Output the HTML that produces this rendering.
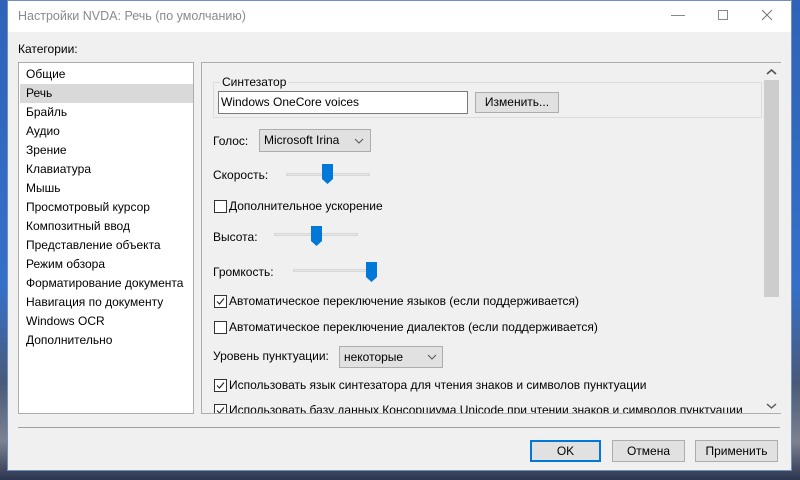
<!DOCTYPE html>
<html><head><meta charset="utf-8"><style>
*{margin:0;padding:0;box-sizing:border-box}
body{width:800px;height:480px;overflow:hidden;position:relative;background:#2a3f6a;font-family:"Liberation Sans","Noto Sans CJK SC",sans-serif;font-size:12px;color:#000}
.a{position:absolute}
.bg{left:0;top:0;width:800px;height:480px;background:linear-gradient(180deg,#2e63b8 0%,#3570c8 60%,#4a5a78 80%,#7c8290 92%,#2c3550 100%)}
.win{left:7px;top:0;width:785px;height:471px;background:#f0f0f0;border:1px solid #6f8fc0}
.tb{left:0;top:0;width:783px;height:31px;background:#fff}
.lst{left:18px;top:62px;width:176px;height:352px;background:#fff;border:1px solid #adadad;padding-top:2px}
.lst div{height:19px;line-height:19px;padding-left:7px;font-size:12px}
.pnl{left:201px;top:62px;width:580px;height:352px;background:#f0f0f0;border:1px solid #adadad;border-right:none}
.btn{background:#e1e1e1;border:1px solid #adadad;text-align:center;font-size:12px}
.cb{width:13px;height:13px;border:1px solid #333;background:#fff}
.lbl{font-size:12px;white-space:nowrap}
.track{height:3px;background:#e7eaea;border:1px solid #d6d6d6}
.th{width:11px;height:20px}
</style></head><body>
<div class="a bg"></div>
<div class="a win">
<div class="a tb"></div>
</div>
<div class="a lbl" style="left:18px;top:9px;color:#8a8a8a;font-size:12.5px">Настройки NVDA: Речь (по умолчанию)</div>
<div class="a" style="left:671px;top:15px;width:14px;height:1px;background:#888"></div>
<div class="a" style="left:718px;top:10px;width:10px;height:10px;border:1px solid #888"></div>
<svg class="a" style="left:761px;top:9px" width="12" height="12"><path d="M1 1L11 11M11 1L1 11" stroke="#777" stroke-width="1"/></svg>
<div class="a lbl" style="left:18px;top:42px">Категории:</div>
<div class="a lst">
<div>Общие</div><div style="background:#d9d9d9;margin-left:1px;padding-left:6px">Речь</div><div>Брайль</div><div>Аудио</div><div>Зрение</div><div>Клавиатура</div><div>Мышь</div><div>Просмотровый курсор</div><div>Композитный ввод</div><div>Представление объекта</div><div>Режим обзора</div><div>Форматирование документа</div><div>Навигация по документу</div><div>Windows OCR</div><div>Дополнительно</div>
</div>
<div class="a pnl"></div>
<div class="a" style="left:763px;top:63px;width:17px;height:350px;background:#f0f0f0"></div>
<div class="a" style="left:764px;top:80px;width:15px;height:217px;background:#cdcdcd"></div>
<svg class="a" style="left:766px;top:68px" width="11" height="8"><path d="M1 6L5.5 2L10 6" stroke="#555" stroke-width="1.6" fill="none"/></svg>
<svg class="a" style="left:766px;top:402px" width="11" height="8"><path d="M1 2L5.5 6L10 2" stroke="#555" stroke-width="1.4" fill="none"/></svg>
<div class="a" style="left:213px;top:82px;width:549px;height:36px;border:1px solid #dcdcdc"></div>
<div class="a lbl" style="left:220px;top:75px;background:#f0f0f0;padding:0 2px">Синтезатор</div>
<div class="a" style="left:218px;top:91px;width:250px;height:23px;background:#fff;border:1px solid #7a7a7a"></div>
<div class="a lbl" style="left:221px;top:95px">Windows OneCore voices</div>
<div class="a btn" style="left:475px;top:92px;width:84px;height:21px;line-height:19px">Изменить...</div>
<div class="a lbl" style="left:213px;top:134px">Голос:</div>
<div class="a btn" style="left:259px;top:129px;width:112px;height:23px;text-align:left;padding-left:4px;line-height:21px">Microsoft Irina</div>
<svg class="a" style="left:354px;top:138px" width="10" height="6"><path d="M1 1L5 5L9 1" stroke="#555" fill="none"/></svg>
<div class="a lbl" style="left:213px;top:168px">Скорость:</div>
<div class="a track" style="left:286px;top:173px;width:84px"></div>
<svg class="a th" style="left:322px;top:164px" width="11" height="20"><path d="M0 0H11V15L5.5 20L0 15Z" fill="#0078d7"/></svg>
<div class="a cb" style="left:214px;top:200px"></div>
<div class="a lbl" style="left:229px;top:199px">Дополнительное ускорение</div>
<div class="a lbl" style="left:213px;top:230px">Высота:</div>
<div class="a track" style="left:274px;top:233px;width:84px"></div>
<svg class="a th" style="left:311px;top:226px" width="11" height="20"><path d="M0 0H11V15L5.5 20L0 15Z" fill="#0078d7"/></svg>
<div class="a lbl" style="left:213px;top:265px">Громкость:</div>
<div class="a track" style="left:293px;top:269px;width:84px"></div>
<svg class="a th" style="left:366px;top:262px" width="11" height="20"><path d="M0 0H11V15L5.5 20L0 15Z" fill="#0078d7"/></svg>
<div class="a cb" style="left:214px;top:295px"></div>
<svg class="a" style="left:215px;top:296px" width="11" height="11"><path d="M2 5.5L4.5 8L9 2.5" stroke="#222" stroke-width="1.1" fill="none"/></svg>
<div class="a lbl" style="left:229px;top:294px">Автоматическое переключение языков (если поддерживается)</div>
<div class="a cb" style="left:214px;top:321px"></div>
<div class="a lbl" style="left:229px;top:320px">Автоматическое переключение диалектов (если поддерживается)</div>
<div class="a lbl" style="left:213px;top:349px">Уровень пунктуации:</div>
<div class="a btn" style="left:339px;top:346px;width:104px;height:22px;text-align:left;padding-left:4px;line-height:20px">некоторые</div>
<svg class="a" style="left:427px;top:354px" width="10" height="6"><path d="M1 1L5 5L9 1" stroke="#555" fill="none"/></svg>
<div class="a cb" style="left:214px;top:379px"></div>
<svg class="a" style="left:215px;top:380px" width="11" height="11"><path d="M2 5.5L4.5 8L9 2.5" stroke="#222" stroke-width="1.1" fill="none"/></svg>
<div class="a lbl" style="left:229px;top:378px">Использовать язык синтезатора для чтения знаков и символов пунктуации</div>
<div class="a" style="left:202px;top:403px;width:561px;height:10px;overflow:hidden">
<div class="a cb" style="left:12px;top:1px"></div>
<svg class="a" style="left:13px;top:2px" width="11" height="11"><path d="M2 5.5L4.5 8L9 2.5" stroke="#222" stroke-width="1.1" fill="none"/></svg>
<div class="a lbl" style="left:27px;top:0px">Использовать базу данных Консорциума Unicode при чтении знаков и символов пунктуации</div>
</div>
<div class="a" style="left:18px;top:427px;width:762px;height:1px;background:#a0a0a0"></div>
<div class="a btn" style="left:530px;top:440px;width:71px;height:22px;line-height:18px;border:2px solid #0078d7">OK</div>
<div class="a btn" style="left:612px;top:440px;width:73px;height:22px;line-height:20px">Отмена</div>
<div class="a btn" style="left:695px;top:440px;width:83px;height:22px;line-height:20px">Применить</div>
</body></html>
